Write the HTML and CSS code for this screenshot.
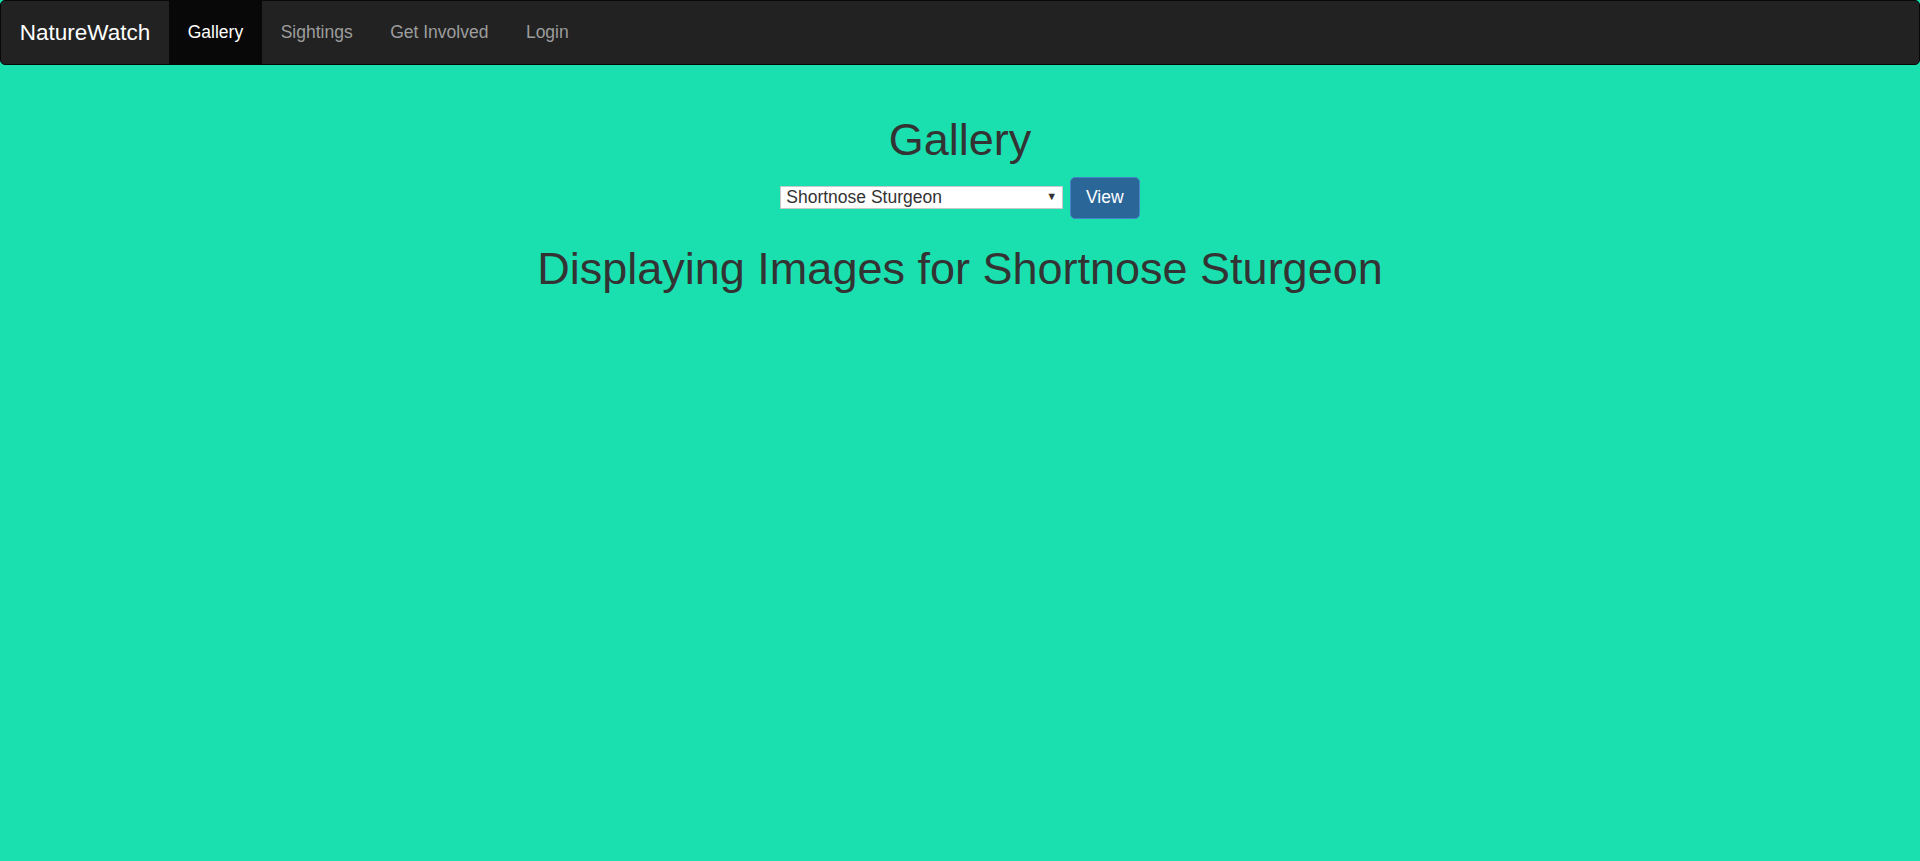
FILE: index.html
```html
<!DOCTYPE html>
<html lang="en">
<head>
<meta charset="utf-8">
<title>NatureWatch - Gallery</title>
<link rel="stylesheet" href="styles.css">
</head>
<body>
<nav class="navbar">
  <div class="navbar-inner">
    <a class="brand" href="#">NatureWatch</a>
    <ul class="nav">
      <li class="active"><a href="#">Gallery</a></li>
      <li><a href="#">Sightings</a></li>
      <li><a href="#">Get Involved</a></li>
      <li><a href="#">Login</a></li>
    </ul>
  </div>
</nav>
<main class="main">
  <h1 class="title">Gallery</h1>
  <form class="picker">
    <div class="select-wrap">
      <select class="species">
        <option>Shortnose Sturgeon</option>
      </select>
      <span class="arrow">&#9660;</span>
    </div>
    <button type="button" class="btn">View</button>
  </form>
  <h1 class="title">Displaying Images for Shortnose Sturgeon</h1>
</main>
</body>
</html>
```

FILE: styles.css
```css
* { box-sizing: border-box; }

html, body {
  margin: 0;
  padding: 0;
}

body {
  background: #1ae0b0;
  font-family: "Liberation Sans", Arial, Helvetica, sans-serif;
  font-size: 17.5px;
  line-height: 1.42857;
  color: #333;
  min-height: 861px;
}

.navbar {
  background: #222;
  border: 1px solid #080808;
  border-radius: 5px;
  margin-bottom: 25px;
}

.navbar-inner {
  display: flex;
  align-items: stretch;
  height: 62.5px;
}

.brand {
  display: block;
  padding: 18.75px 18.75px;
  font-size: 22.5px;
  line-height: 25px;
  color: #fff;
  text-decoration: none;
}

.nav {
  display: flex;
  list-style: none;
  margin: 0;
  padding: 0;
}

.nav li a {
  display: block;
  padding: 18.75px 18.75px;
  font-size: 17.5px;
  line-height: 25px;
  color: #9d9d9d;
  text-decoration: none;
}

.nav li.active a {
  background: #080808;
  color: #fff;
}

.main {
  display: flow-root;
  text-align: center;
}

.title {
  font-size: 45px;
  font-weight: 500;
  line-height: 1.1;
  margin: 25px 0 12.5px;
  color: #333;
}

.picker {
  display: flex;
  justify-content: center;
  align-items: center;
  gap: 6.5px;
  height: 42.5px;
}

.select-wrap {
  position: relative;
  width: 283px;
  height: 23px;
  margin-bottom: 2px;
}

.species {
  appearance: none;
  -webkit-appearance: none;
  width: 100%;
  height: 100%;
  margin: 0;
  padding: 0 20px 0 5px;
  border: 1px solid #c8c8c8;
  border-radius: 0;
  background: #fff;
  font-family: "Liberation Sans", Arial, sans-serif;
  font-size: 17.5px;
  line-height: 21px;
  color: #333;
}

.arrow {
  position: absolute;
  right: 6px;
  top: 5px;
  font-size: 11px;
  line-height: 12px;
  color: #333;
  pointer-events: none;
}

.btn {
  width: 70px;
  height: 42px;
  padding: 7.5px 15px;
  border: 1px solid #4384c4;
  border-radius: 5px;
  background: #2b6699;
  color: #fff;
  font-family: "Liberation Sans", Arial, sans-serif;
  font-size: 17.5px;
  line-height: 25px;
  cursor: pointer;
}
```
